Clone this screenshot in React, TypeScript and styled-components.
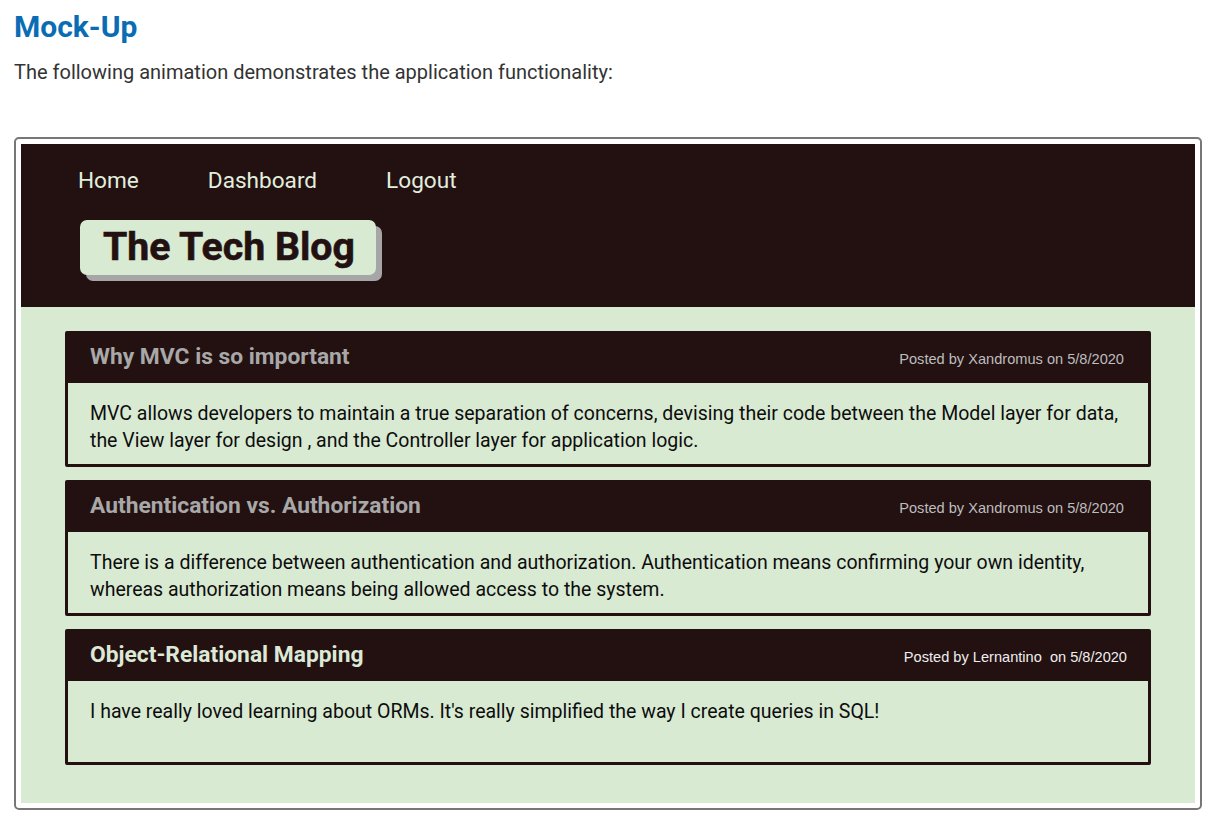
import React from "react";
import styled, { createGlobalStyle } from "styled-components";

const Global = createGlobalStyle`
  html, body { margin: 0; padding: 0; background: #ffffff; }
  body { font-family: Roboto, "Liberation Sans", Arial, sans-serif; }
`;

const DARK = "#231112";
const GREEN = "#d9ead3";

const Page = styled.div`
  padding: 9px 21px 0 14px;
`;

const Heading = styled.h1`
  margin: 0;
  font-size: 30px;
  line-height: 36px;
  font-weight: 700;
  color: #0a6db4;
`;

const Intro = styled.p`
  margin: 13px 0 0;
  font-size: 20px;
  line-height: 28px;
  color: #333333;
`;

const Frame = styled.div`
  margin-top: 51px;
  width: 1188px;
  box-sizing: border-box;
  border: 2px solid #777777;
  border-radius: 5px;
  padding: 5px;
  background: #ffffff;
`;

const Shot = styled.div`
  display: flex;
  flex-direction: column;
  background: ${GREEN};
`;

const TopBar = styled.header`
  background: ${DARK};
  padding: 22px 0 32px 57px;
  display: flex;
  flex-direction: column;
  align-items: flex-start;
  gap: 24px;
`;

const Nav = styled.nav`
  display: flex;
  gap: 69px;
`;

const NavLink = styled.span`
  font-size: 22.6px;
  line-height: 30px;
  color: #e2eedd;
`;

const Badge = styled.div`
  margin-left: 2px;
  background: ${GREEN};
  border-radius: 7px;
  padding: 0 21px 0 23px;
  height: 55px;
  display: flex;
  align-items: center;
  box-shadow: 6px 6px 0 #a6a6a6;
`;

const BlogTitle = styled.h2`
  margin: 0;
  font-size: 39.2px;
  line-height: 55px;
  font-weight: 700;
  color: ${DARK};
  -webkit-text-stroke: 0.6px ${DARK};
`;

const Posts = styled.main`
  padding: 24px 44px 38px;
  display: flex;
  flex-direction: column;
  gap: 13px;
`;

const Card = styled.article`
  border: 3px solid ${DARK};
  border-radius: 2px;
  background: ${GREEN};
`;

const CardHead = styled.div`
  background: ${DARK};
  height: 49px;
  display: flex;
  align-items: center;
  justify-content: space-between;
  padding: 0 24px 0 22px;
`;

const CardTitle = styled.h3<{ $light?: boolean }>`
  margin: 0 0 4px;
  font-size: 22.8px;
  font-weight: 700;
  color: ${(p) => (p.$light ? "#dde9d7" : "#a8a8a8")};
`;

const Meta = styled.span<{ $light?: boolean }>`
  font-family: "Liberation Sans", Arial, sans-serif;
  font-size: 14.6px;
  white-space: pre;
  color: ${(p) => (p.$light ? "#eeeeee" : "#bdbdbd")};
  margin-right: ${(p) => (p.$light ? "-3px" : "0")};
`;

const CardBody = styled.p`
  margin: 0;
  padding: 17px 22px 10px;
  min-height: 54px;
  font-size: 19.5px;
  line-height: 27px;
  color: #0d0d0d;
`;

const posts = [
  {
    title: "Why MVC is so important",
    meta: "Posted by Xandromus on 5/8/2020",
    body: "MVC allows developers to maintain a true separation of concerns, devising their code between the Model layer for data, the View layer for design , and the Controller layer for application logic.",
    light: false,
  },
  {
    title: "Authentication vs. Authorization",
    meta: "Posted by Xandromus on 5/8/2020",
    body: "There is a difference between authentication and authorization. Authentication means confirming your own identity, whereas authorization means being allowed access to the system.",
    light: false,
  },
  {
    title: "Object-Relational Mapping",
    meta: "Posted by Lernantino  on 5/8/2020",
    body: "I have really loved learning about ORMs. It's really simplified the way I create queries in SQL!",
    light: true,
  },
];

export default function App() {
  return (
    <>
      <Global />
      <Page>
        <Heading>Mock-Up</Heading>
        <Intro>The following animation demonstrates the application functionality:</Intro>
        <Frame>
          <Shot>
            <TopBar>
              <Nav>
                <NavLink>Home</NavLink>
                <NavLink>Dashboard</NavLink>
                <NavLink>Logout</NavLink>
              </Nav>
              <Badge>
                <BlogTitle>The Tech Blog</BlogTitle>
              </Badge>
            </TopBar>
            <Posts>
              {posts.map((p) => (
                <Card key={p.title}>
                  <CardHead>
                    <CardTitle $light={p.light}>{p.title}</CardTitle>
                    <Meta $light={p.light}>{p.meta}</Meta>
                  </CardHead>
                  <CardBody>{p.body}</CardBody>
                </Card>
              ))}
            </Posts>
          </Shot>
        </Frame>
      </Page>
    </>
  );
}
